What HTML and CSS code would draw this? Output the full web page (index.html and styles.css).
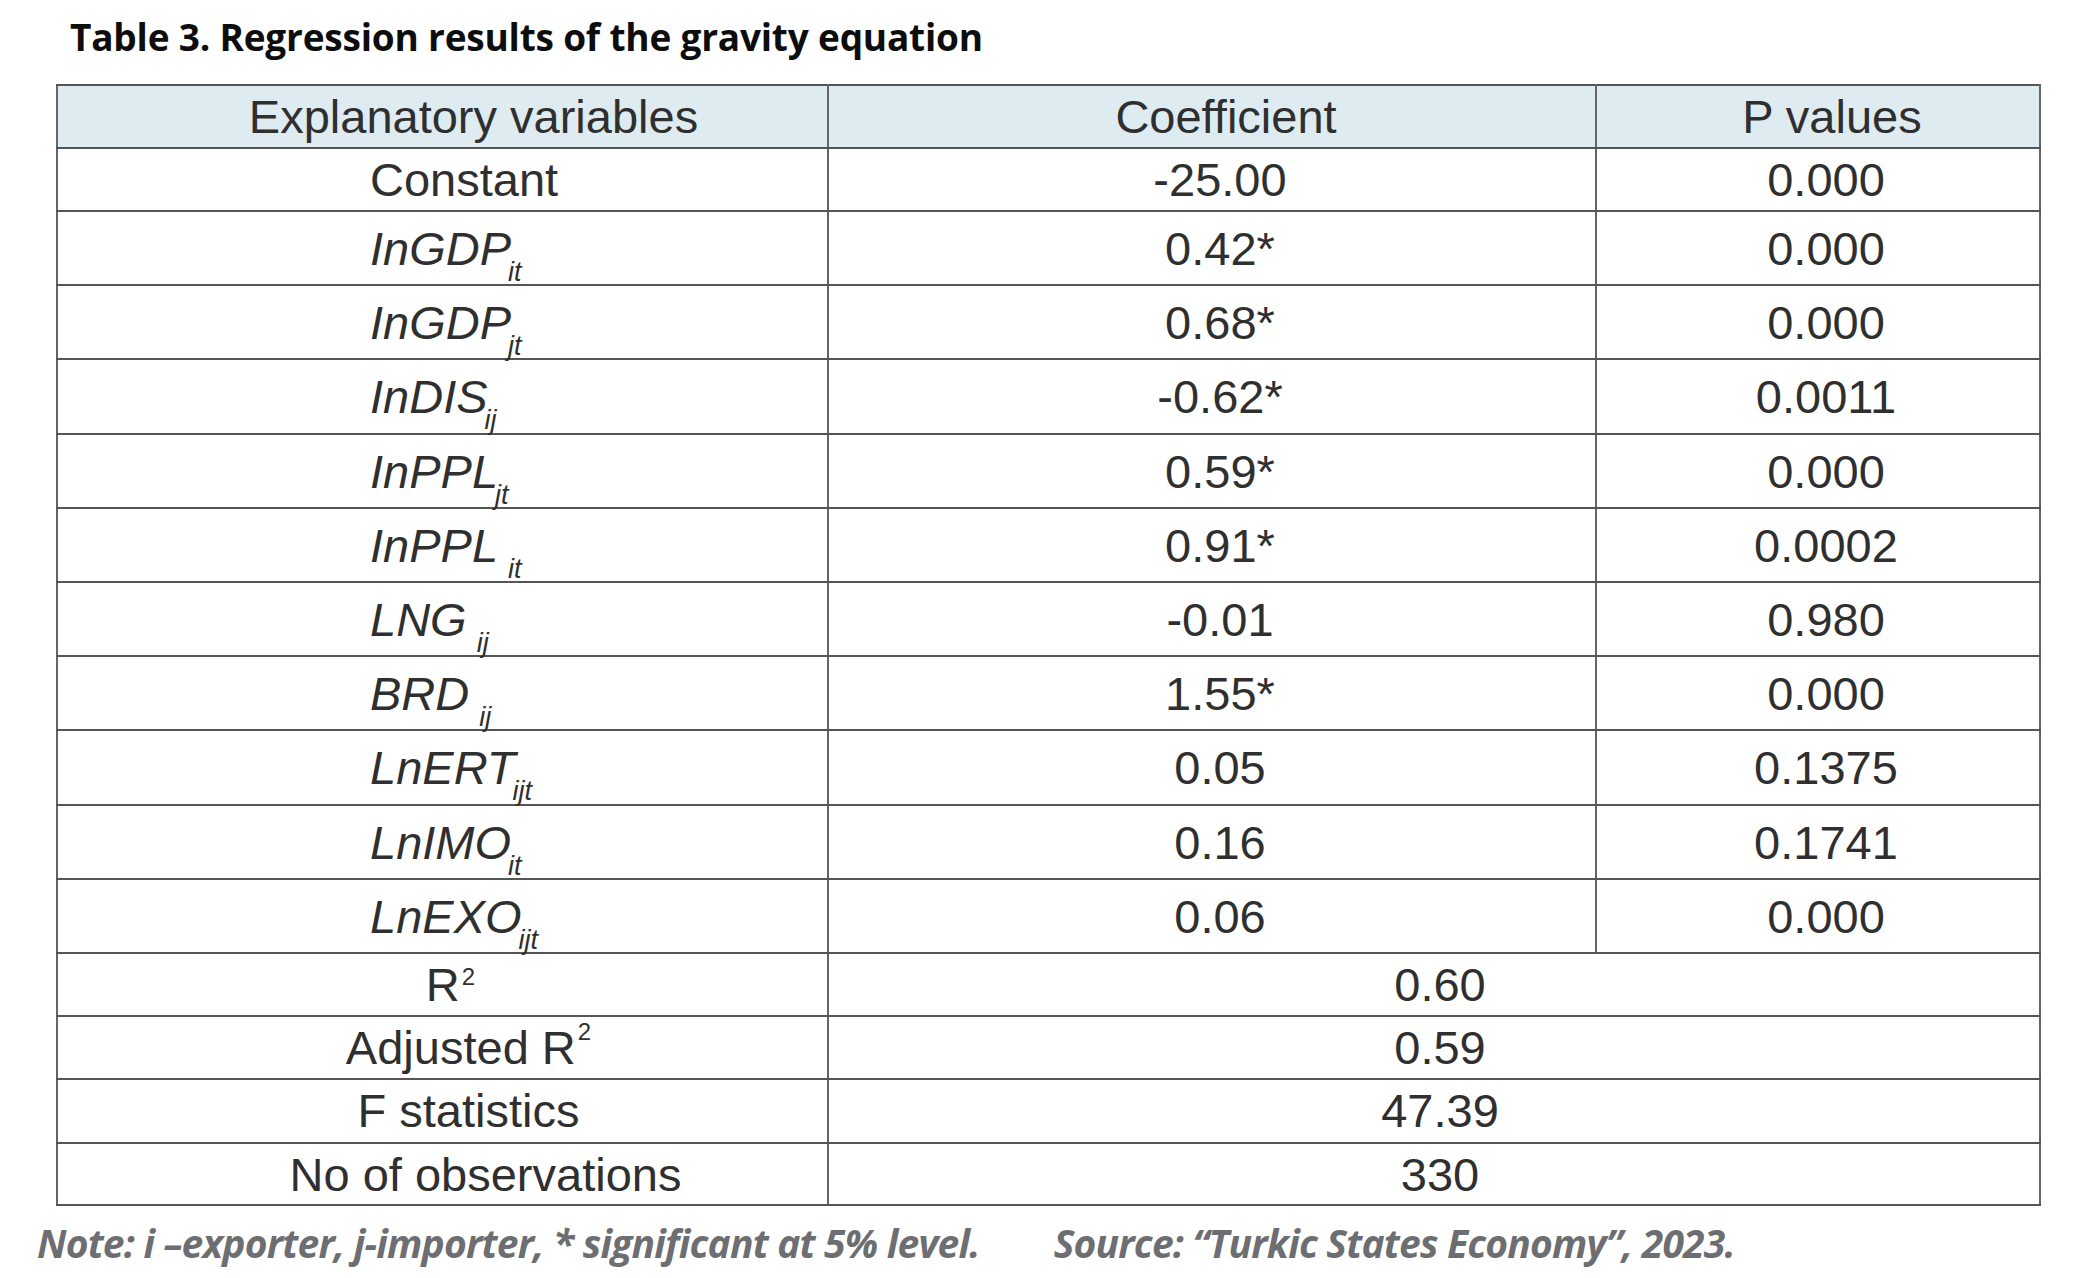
FILE: index.html
```html
<!DOCTYPE html>
<html lang="en">
<head>
<meta charset="utf-8">
<title>Table 3. Regression results of the gravity equation</title>
<link rel="stylesheet" href="styles.css">
</head>
<body>
<div class="page">
  <h1 class="title">Table 3. Regression results of the gravity equation</h1>
  <table class="reg">
    <colgroup>
      <col class="col-var">
      <col class="col-coef">
      <col class="col-p">
    </colgroup>
    <thead>
      <tr class="row-head">
        <th class="c-stat c-head-var">Explanatory variables</th>
        <th class="c-num c-head">Coefficient</th>
        <th class="c-num c-head">P values</th>
      </tr>
    </thead>
    <tbody>
      <tr class="row-plain">
        <td class="c-var">Constant</td>
        <td class="c-num">-25.00</td>
        <td class="c-num">0.000</td>
      </tr>
      <tr class="row-sub">
        <td class="c-var"><i>InGDP</i><sub class="ix">it</sub></td>
        <td class="c-num">0.42*</td>
        <td class="c-num">0.000</td>
      </tr>
      <tr class="row-sub">
        <td class="c-var"><i>InGDP</i><sub class="ix">jt</sub></td>
        <td class="c-num">0.68*</td>
        <td class="c-num">0.000</td>
      </tr>
      <tr class="row-sub">
        <td class="c-var"><i>InDIS</i><sub class="ix">ij</sub></td>
        <td class="c-num">-0.62*</td>
        <td class="c-num">0.0011</td>
      </tr>
      <tr class="row-sub">
        <td class="c-var"><i>InPPL</i><sub class="ix">jt</sub></td>
        <td class="c-num">0.59*</td>
        <td class="c-num">0.000</td>
      </tr>
      <tr class="row-sub">
        <td class="c-var"><i>InPPL</i> <sub class="ix">it</sub></td>
        <td class="c-num">0.91*</td>
        <td class="c-num">0.0002</td>
      </tr>
      <tr class="row-sub">
        <td class="c-var"><i>LNG</i> <sub class="ix">ij</sub></td>
        <td class="c-num">-0.01</td>
        <td class="c-num">0.980</td>
      </tr>
      <tr class="row-sub">
        <td class="c-var"><i>BRD</i> <sub class="ix">ij</sub></td>
        <td class="c-num">1.55*</td>
        <td class="c-num">0.000</td>
      </tr>
      <tr class="row-sub">
        <td class="c-var"><i>LnERT</i><sub class="ix">ijt</sub></td>
        <td class="c-num">0.05</td>
        <td class="c-num">0.1375</td>
      </tr>
      <tr class="row-sub">
        <td class="c-var"><i>LnIMO</i><sub class="ix">it</sub></td>
        <td class="c-num">0.16</td>
        <td class="c-num">0.1741</td>
      </tr>
      <tr class="row-sub">
        <td class="c-var"><i>LnEXO</i><sub class="ix">ijt</sub></td>
        <td class="c-num">0.06</td>
        <td class="c-num">0.000</td>
      </tr>
      <tr class="row-plain">
        <td class="c-stat c-r2">R<sup class="pw">2</sup></td>
        <td class="c-merged" colspan="2">0.60</td>
      </tr>
      <tr class="row-plain">
        <td class="c-stat">Adjusted R<sup class="pw pw-high">2</sup></td>
        <td class="c-merged" colspan="2">0.59</td>
      </tr>
      <tr class="row-plain row-f">
        <td class="c-stat">F statistics</td>
        <td class="c-merged" colspan="2">47.39</td>
      </tr>
      <tr class="row-plain row-n">
        <td class="c-stat c-obs">No of observations</td>
        <td class="c-merged" colspan="2">330</td>
      </tr>
    </tbody>
  </table>
  <p class="note">
    <span class="note-text">Note: i –exporter, j-importer, * significant at 5% level.</span>
    <span class="note-source">Source: “Turkic States Economy”, 2023.</span>
  </p>
</div>
</body>
</html>
```
FILE: styles.css
```css
html, body {
  margin: 0;
  padding: 0;
  background: #ffffff;
}

.page {
  width: 2084px;
  height: 1278px;
  overflow: hidden;
}

.title {
  margin: 0 0 0 70px;
  padding-top: 12px;
  height: 84px;
  box-sizing: border-box;
  font-family: "Open Sans", "Liberation Sans", sans-serif;
  font-weight: 700;
  font-size: 37px;
  line-height: 50px;
  color: #0d0d0d;
  letter-spacing: -0.2px;
}

.reg {
  margin-left: 56px;
  width: 1983px;
  table-layout: fixed;
  border-collapse: collapse;
  font-family: "Liberation Sans", Arial, sans-serif;
  font-size: 47px;
  line-height: 52px;
  color: #2f2f2f;
}

.col-var { width: 771px; }
.col-coef { width: 768px; }
.col-p { width: 444px; }

.reg th,
.reg td {
  border-top: 2px solid #555555;
  border-bottom: 2px solid #555555;
  border-left: 2px solid #666666;
  border-right: 2px solid #666666;
  padding: 5px 0 0 0;
  vertical-align: top;
  font-weight: 400;
  white-space: nowrap;
}

.row-head th {
  background: #deebf1;
  height: 63px;
  box-sizing: border-box;
}

.row-plain td {
  height: 63px;
  box-sizing: border-box;
}

.row-f td { height: 64px; }
.row-n td { height: 62px; }

.row-sub td {
  height: 74.2px;
  box-sizing: border-box;
  padding-top: 11px;
}

.c-var {
  text-align: left;
  padding-left: 312px !important;
}

.c-stat {
  text-align: center;
  padding-left: 52px !important;
}

.c-head-var { padding-left: 62px !important; }
.c-r2 { padding-left: 16px !important; }
.c-obs { padding-left: 86px !important; }

.c-num {
  text-align: center;
  padding-left: 16px !important;
}

.c-head { padding-left: 28px !important; }

.c-merged {
  text-align: center;
  padding-left: 12px !important;
}

.reg i {
  font-style: italic;
}

.ix {
  font-style: italic;
  font-size: 27px;
  line-height: 0;
  vertical-align: -16px;
  margin-left: -3px;
}

.pw {
  font-size: 24px;
  line-height: 0;
  vertical-align: 16px;
  margin-left: 2px;
}

.pw-high {
  vertical-align: 24px;
}

.note {
  margin: 10px 0 0 37px;
  display: flex;
  font-family: "Open Sans", "Liberation Sans", sans-serif;
  font-weight: 700;
  font-style: italic;
  font-stretch: 90%;
  font-size: 39px;
  line-height: 54px;
  letter-spacing: -0.8px;
  color: #6d6e71;
  white-space: nowrap;
}

.note-source {
  margin-left: 74px;
}
```
